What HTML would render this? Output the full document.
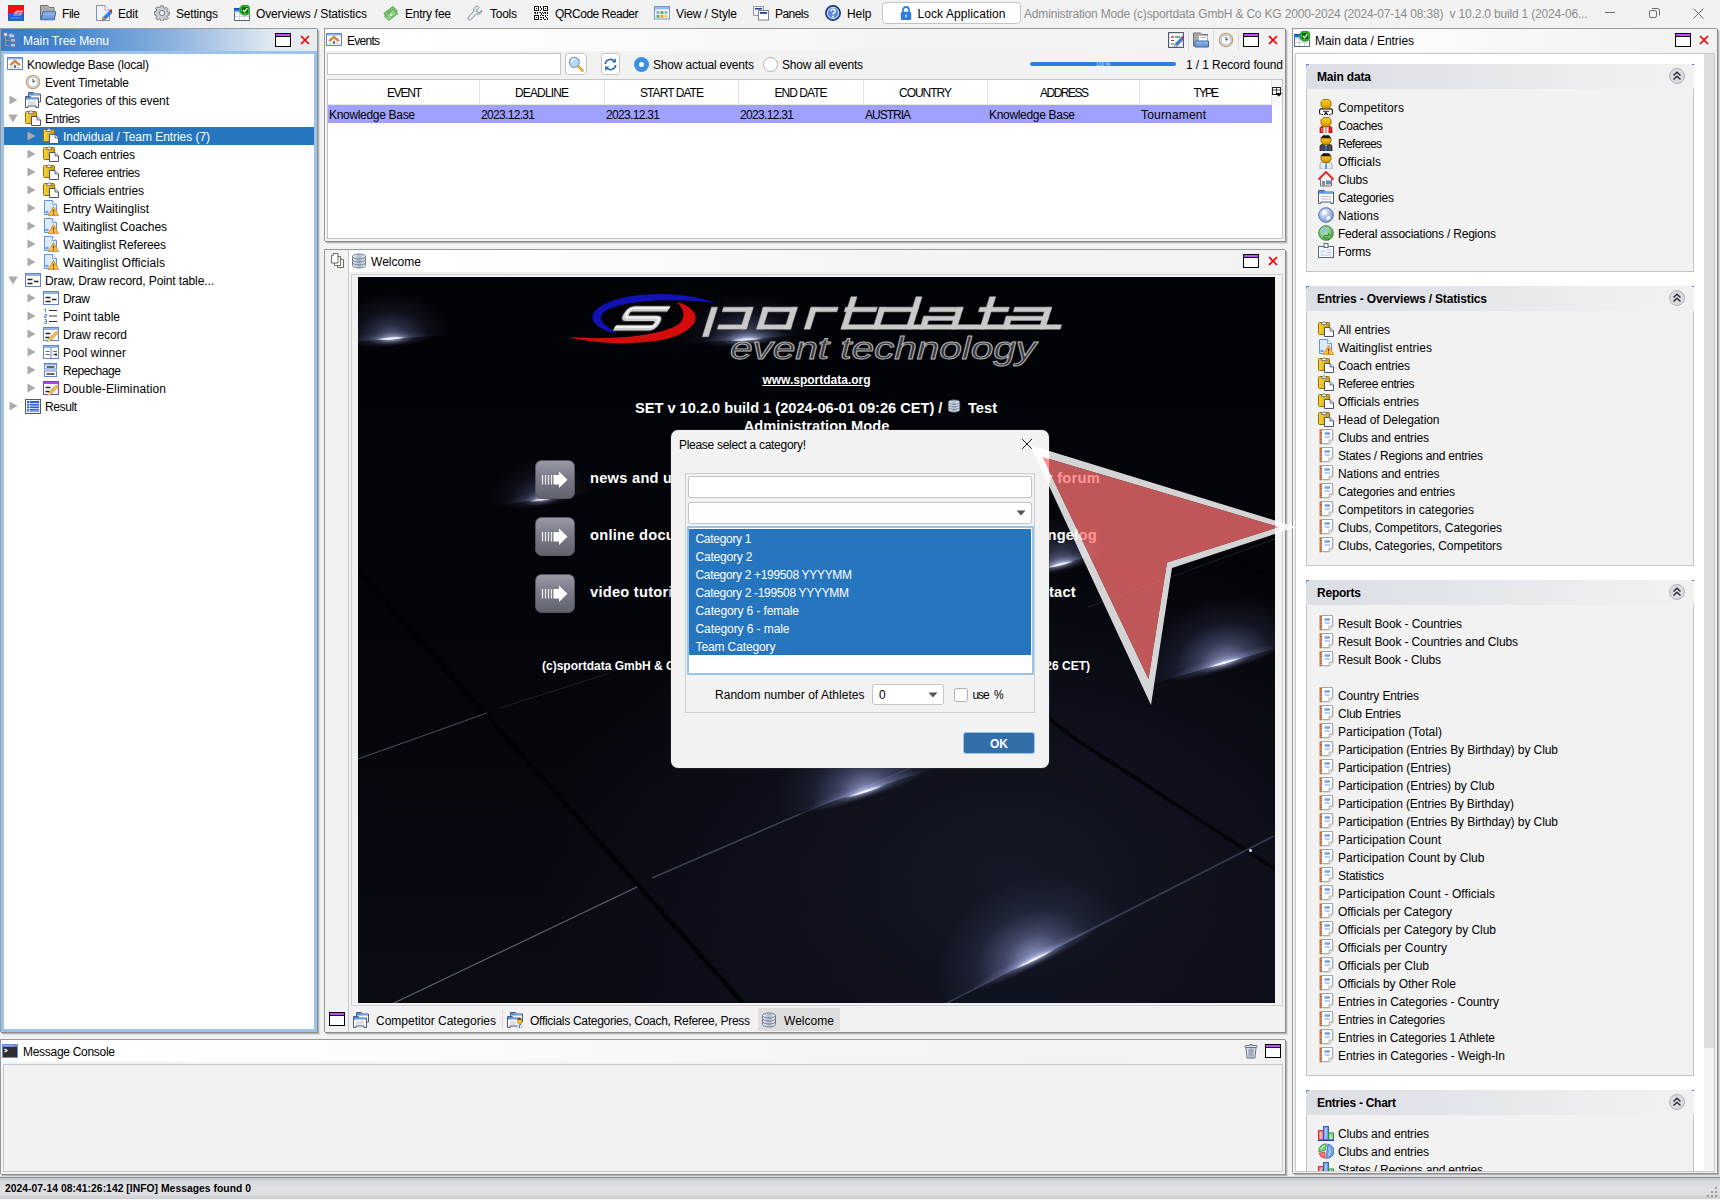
<!DOCTYPE html><html><head><meta charset="utf-8"><title>SET</title><style>*{box-sizing:border-box;margin:0;padding:0}
html,body{width:1720px;height:1200px;overflow:hidden;background:#f2f2f2;font-family:"Liberation Sans",sans-serif;font-size:12px;color:#000;letter-spacing:-0.12px}
.a{position:absolute}
.t{position:absolute;white-space:pre;line-height:16px;height:16px}
.ic{position:absolute;width:16px;height:16px;overflow:visible}
/* panels */
.pnl{position:absolute;background:#fff;border-top:1px solid #9a9a9a;border-left:1px solid #9a9a9a;box-shadow:1px 1px 0 #8c8c8c,2px 2px 0 #b4b4b4,3px 3px 0 #dcdcdc}
</style></head><body>
<svg width="0" height="0" style="position:absolute"><defs>
<linearGradient id="g-yel" x1="0" y1="0" x2="1" y2="0"><stop offset="0" stop-color="#f9d63a"/><stop offset="1" stop-color="#cf9a0c"/></linearGradient>
<linearGradient id="g-head" x1="0" y1="0" x2="0" y2="1"><stop offset="0" stop-color="#f8cc14"/><stop offset=".55" stop-color="#eab40c"/><stop offset="1" stop-color="#c88c06"/></linearGradient>
<linearGradient id="g-blu" x1="0" y1="0" x2="0" y2="1"><stop offset="0" stop-color="#9dc0ea"/><stop offset="1" stop-color="#5d8fd0"/></linearGradient>
<linearGradient id="g-sil" x1="0" y1="0" x2="1" y2="0"><stop offset="0" stop-color="#f4f6f9"/><stop offset=".5" stop-color="#aebccb"/><stop offset="1" stop-color="#eef1f5"/></linearGradient>
<radialGradient id="g-globe" cx=".4" cy=".35" r=".7"><stop offset="0" stop-color="#e8f0fb"/><stop offset="1" stop-color="#6f94d6"/></radialGradient>
<radialGradient id="g-globe2" cx=".4" cy=".35" r=".7"><stop offset="0" stop-color="#c9ecc0"/><stop offset="1" stop-color="#4aa44a"/></radialGradient>
<symbol id="i-max" viewBox="0 0 16 14"><rect x="0.5" y="0.5" width="15" height="13" fill="#fff" stroke="#000"/><rect x="1" y="1" width="14" height="2" fill="#c64dff"/><rect x="1" y="3" width="14" height="1" fill="#000"/></symbol>
<symbol id="i-x" viewBox="0 0 10 10"><path d="M1 1L9 9M9 1L1 9" stroke="#f20000" stroke-width="1.700" fill="none"/></symbol>
<symbol id="i-logo" viewBox="0 0 16 16"><rect width="16" height="8" fill="#f01010"/><rect y="8" width="16" height="8" fill="#1f5fd0"/><path d="M5 10.500h7.500l2-2.200H9l.5-.8h5l1-2H8.500l-3 3.300h5.500l-.5.700H6z" fill="#c4c0c4"/><path d="M5 10.500h7.500l.8-.9H5.800z" fill="#8a8a90"/><path d="M3 13h11" stroke="#6a90dc" stroke-width="1.600" stroke-dasharray="1.500 .7"/></symbol>
<symbol id="i-file" viewBox="0 0 16 16"><path d="M.5 14.500v-14h7l2 2h4.500v5" fill="#b4b4b4" stroke="#6e6e6e"/><path d="M1.500 3h6M1.500 5h11M1.500 7h11" stroke="#9a9a9a" stroke-width=".8"/><path d="M.8 14.800l2.200-8h12.800l-1.500 8z" fill="url(#g-blu)" stroke="#3a66aa"/></symbol>
<symbol id="i-edit" viewBox="0 0 16 16"><path d="M.5 .5h8.500l4.500 4.500v10.500h-13z" fill="#eef3fb" stroke="#8a8fa8"/><path d="M9 .5v4.500h4.500" fill="#fff" stroke="#8a8fa8" stroke-width=".8"/><path d="M6.500 15l.8-3 7-7 2.200 2.200-7 7z" fill="#2f7fe8" stroke="#1f55a8" stroke-width=".6"/><path d="M8 11.500l6-6" stroke="#9cc4f8" stroke-width=".8"/><path d="M13.600 5.700l1.300-1.300q1-.6 1.800.2t.2 1.800l-1.300 1.300z" fill="#e8202a"/><path d="M6.500 15l.8-3 2.200 2.200z" fill="#f0a830" stroke="#a86a10" stroke-width=".5"/></symbol>
<symbol id="i-gear" viewBox="0 0 16 16"><path d="M6.8.8h2.4l.4 1.9 1.3.6 1.7-1 1.7 1.7-1 1.7.6 1.3 1.9.4v2.4l-1.9.4-.6 1.3 1 1.7-1.7 1.7-1.7-1-1.3.6-.4 1.9H6.800l-.4-1.9-1.300-.6-1.700 1-1.700-1.700 1-1.700-.6-1.300-1.900-.4V6.800l1.900-.4.6-1.300-1-1.700 1.700-1.700 1.700 1 1.300-.6z" fill="#c9cdd3" stroke="#6c7078" stroke-width=".9"/><circle cx="8" cy="8" r="2.6" fill="#f2f2f2" stroke="#6c7078" stroke-width=".9"/></symbol>
<symbol id="i-tblchk" viewBox="0 0 16 16"><rect x=".5" y="3.500" width="15" height="12" fill="#fff" stroke="#c4cad4"/><path d="M.5 8h15M.5 11.500h15M5.500 3.500v12M10.500 3.500v12" stroke="#c9d0dc" stroke-width=".9"/><path d="M.5 15.500h15M15.500 9v6.500M.5 7v8.500" stroke="#5a6478" stroke-width="1" fill="none"/><rect x="0" y="3" width="5.500" height="3.500" fill="#1f6fe0"/><rect x="0" y="3" width="5.500" height="1" fill="#164fa8"/><path d="M8.500 0h5l2.500 2.500v5l-2.500 2.500h-5l-2.500-2.500v-5z" fill="#2ab82a" stroke="#168a16" stroke-width=".8"/><rect x="8" y="2" width="6" height="6" fill="#0a640a"/><path d="M9 5l1.600 1.700 2.800-3.500" stroke="#fff" stroke-width="1.300" fill="none"/></symbol>
<symbol id="i-money" viewBox="0 0 16 16"><path d="M.8 8.500l9-7 4.500 4.200-9 7z" fill="#7cc870" stroke="#4a9a46" stroke-width=".9"/><path d="M1.500 11.200l9-7 4.500 4.200-9 7z" fill="#92d486" stroke="#4a9a46" stroke-width=".9"/><circle cx="8.300" cy="9.700" r="1.900" fill="#dcf2d6" stroke="#4a9a46" stroke-width=".6"/><path d="M3.500 11l1.200 1.200M12 7.200l1.200 1.200" stroke="#4a9a46" stroke-width=".7"/></symbol>
<symbol id="i-wrench" viewBox="0 0 16 16"><path d="M10.500 1a4 4 0 0 0-3.700 5.400L1.300 12a1.700 1.700 0 0 0 2.500 2.500L9.400 9A4 4 0 0 0 14.900 5.200L12.500 7.500 10.300 7 9.800 4.800 12.100 2.500A4 4 0 0 0 10.500 1z" fill="#e6eaf0" stroke="#78828f" stroke-width=".9"/></symbol>
<symbol id="i-qr" viewBox="0 0 16 16"><rect width="16" height="16" fill="#fff"/><g fill="none" stroke="#111" stroke-width="1"><rect x="1.500" y="1.500" width="4" height="4"/><rect x="10.500" y="1.500" width="4" height="4"/><rect x="1.500" y="10.500" width="4" height="4"/></g><g fill="#111"><rect x="3" y="3" width="1" height="1"/><rect x="12" y="3" width="1" height="1"/><rect x="3" y="12" width="1" height="1"/><rect x="7" y="1" width="1" height="2"/><rect x="8" y="3" width="1" height="2"/><rect x="7" y="5" width="1" height="1"/><rect x="1" y="7" width="2" height="1"/><rect x="4" y="7" width="1" height="2"/><rect x="6" y="7" width="2" height="1"/><rect x="9" y="7" width="1" height="1"/><rect x="11" y="7" width="2" height="1"/><rect x="14" y="7" width="1" height="2"/><rect x="2" y="8" width="1" height="1"/><rect x="8" y="8" width="1" height="2"/><rect x="10" y="8" width="1" height="1"/><rect x="12" y="8" width="1" height="1"/><rect x="7" y="10" width="1" height="1"/><rect x="9" y="10" width="2" height="1"/><rect x="12" y="10" width="1" height="2"/><rect x="14" y="10" width="1" height="1"/><rect x="7" y="12" width="2" height="1"/><rect x="10" y="12" width="1" height="2"/><rect x="13" y="12" width="1" height="1"/><rect x="8" y="14" width="1" height="1"/><rect x="11" y="14" width="2" height="1"/><rect x="14" y="13" width="1" height="2"/><rect x="7" y="14" width="1" height="1"/></g></symbol>
<symbol id="i-view" viewBox="0 0 16 16"><rect x=".5" y="1.500" width="15" height="12.500" fill="#fff" stroke="#6f94d6"/><rect x="1" y="2" width="14" height="2.500" fill="#9abcec"/><rect x="2.500" y="6" width="3" height="3" fill="#7fb4ee"/><rect x="6.500" y="6" width="3" height="3" fill="#5fae4c"/><rect x="10.500" y="6" width="3" height="3" fill="#7fb4ee"/><rect x="2.500" y="9.800" width="3" height="3" fill="#5fae4c"/><rect x="6.500" y="9.800" width="3" height="3" fill="#e8933a"/><rect x="10.500" y="9.800" width="3" height="3" fill="#f0cc3a"/></symbol>
<symbol id="i-panels" viewBox="0 0 16 16"><rect x=".5" y="1.500" width="10" height="9" fill="#f4f4f4" stroke="#9a9fa8"/><rect x="2" y="3" width="7" height="1.500" fill="#1f3f9a"/><rect x="5.500" y="5.500" width="10" height="9.500" fill="#fff" stroke="#7a7f88"/><rect x="7" y="7" width="7" height="1.800" fill="#1f3f9a"/></symbol>
<symbol id="i-help" viewBox="0 0 16 16"><circle cx="8" cy="8" r="7.300" fill="#3b6fd0" stroke="#16286a" stroke-width="1.200"/><circle cx="8" cy="8" r="5.600" fill="#5a8ae0" stroke="#e4ecfa" stroke-width=".9"/><path d="M6 6.300a2 2 0 1 1 3 1.700c-.7.400-1 .8-1 1.600" stroke="#fff" stroke-width="1.500" fill="none"/><circle cx="8" cy="11.700" r=".9" fill="#fff"/></symbol>
<symbol id="i-lock" viewBox="0 0 12 16"><path d="M3 7V5a3 3 0 0 1 6 0v2" fill="none" stroke="#2f7be0" stroke-width="1.800"/><rect x=".8" y="6.800" width="10.400" height="8.200" rx="1.500" fill="#2f7be0"/><rect x="5.300" y="9.500" width="1.400" height="3" fill="#d6e6fb"/></symbol>
<symbol id="i-tree" viewBox="0 0 16 16"><path d="M2.500 4v10M2.500 8.500h4M2.500 13.500h4M3 2.500h3" stroke="#9a948c" fill="none"/><rect x="1" y="1" width="3" height="3" fill="#fff" stroke="#8c8c9c" stroke-width=".8"/><path d="M6 1.500h3l1 1h1.500v3H6z" fill="#a9c9f0" stroke="#6a7fa8" stroke-width=".8"/><rect x="7.500" y="6.500" width="5" height="3.500" fill="#9fc4f2" stroke="#6a6f98" stroke-width=".9"/><rect x="7.500" y="11.500" width="5" height="3.500" fill="#9fc4f2" stroke="#6a6f98" stroke-width=".9"/></symbol>
<symbol id="i-home" viewBox="0 1 16 16"><rect x=".5" y="2.500" width="15" height="12" fill="#fff" stroke="#5f83cc"/><rect x="1" y="3" width="14" height="1.500" fill="#8fb3ea"/><path d="M4.800 9.500L8 6.800l3.200 2.700V13H4.800z" fill="#f1f1ee" stroke="#bdbdb5" stroke-width=".5"/><path d="M2.600 9.300L8 4.600l5.400 4.700-1.300 1.300L8 7.200l-4.100 3.400z" fill="#d08a4a" stroke="#b06a2a" stroke-width=".4"/><rect x="7" y="10" width="2" height="3" fill="#77777f"/><path d="M2 13.300q1.500-1.800 3 0zM11 13.300q1.500-1.800 3 0z" fill="#56b040"/></symbol>
<symbol id="i-clock" viewBox="0 0 16 16"><circle cx="8" cy="8" r="6.600" fill="#f6f9fd" stroke="#c9a26a" stroke-width="1.400"/><circle cx="8" cy="8" r="5" fill="#fff" stroke="#8fb0e6" stroke-width=".9"/><path d="M8 4.800V8.300l2.300-1.700" stroke="#444" stroke-width="1" fill="none"/></symbol>
<symbol id="i-cats" viewBox="0 0 16 16"><path d="M3.500 9V.5h5l1 1.500h6V10h-2" fill="#fff" stroke="#4d5a70"/><path d="M4 1h4.200l1 1.500H15v1H4z" fill="#4a94ea"/><path d="M.5 15.500V4.500h5l1 1.500h7v9.500h-2.500v-1.500h-8v1.500z" fill="#fff" stroke="#4d5a70"/><path d="M1 5h4.200l1 1.500H13v1H1z" fill="#4a94ea"/><path d="M3 10h8M3 12h8" stroke="#b9c0cc"/></symbol>
<symbol id="i-clip" viewBox="0 0 16 16"><rect x=".5" y="1.500" width="11" height="12" rx="1" fill="url(#g-yel)" stroke="#9a6c06"/><path d="M3.500 3.500V2l1.200-.3Q6 -.6 7.300 1.700L8.500 2v1.500z" fill="#eef0f4" stroke="#6a6f7c" stroke-width=".8"/><path d="M6.500 6.500h5.500l3.500 3.500v5.500h-9z" fill="#fdfdff" stroke="#4d5268"/><path d="M12 6.500v3.500h3.500" fill="#d9dcf0" stroke="#4d5268" stroke-width=".8"/></symbol>
<symbol id="i-dwarn" viewBox="0 0 16 16"><path d="M1.500 .5h8l4 4v10h-12z" fill="#dcebfb" stroke="#5f93dc"/><path d="M9.500 .5v4h4" fill="#f4f9ff" stroke="#5f93dc" stroke-width=".8"/><rect x="2.500" y="11" width="3" height="2" fill="#5f9fea"/><path d="M10.500 6.500L5.300 15.500h10.400z" fill="#f9c449" stroke="#d98a1e" stroke-width=".9"/><path d="M10.500 9.500v3" stroke="#7a3c00" stroke-width="1.300"/><circle cx="10.500" cy="14" r=".8" fill="#7a3c00"/></symbol>
<symbol id="i-draw" viewBox="0 0 16 16"><rect x=".5" y="1.500" width="15" height="13" fill="#fff" stroke="#5f83cc"/><rect x="1" y="2" width="14" height="2" fill="#8fb3ea"/><path d="M2.500 7.500h5M2.500 11.500h5M9 9.500h4.500" stroke="#222" stroke-width="1.400"/></symbol>
<symbol id="i-ptable" viewBox="0 0 16 16"><path d="M6 2.500h8M6 8h8M6 13.500h8" stroke="#333" stroke-width="1.200"/><path d="M2.500 0.500v4M1.500 1.500l1-1M1.500 6.500h2v1.500h-2v1.500h2M1.500 11.500h2v4h-2M1.500 13.500h2" stroke="#4a7fd8" stroke-width=".9" fill="none"/></symbol>
<symbol id="i-drawrec" viewBox="0 0 16 16"><rect x=".5" y="1.500" width="15" height="13" fill="#fff" stroke="#5f83cc"/><rect x="1" y="2" width="14" height="2" fill="#8fb3ea"/><path d="M2.500 7.500h5M2.500 11.500h4" stroke="#222" stroke-width="1.400"/><path d="M4.500 15.500l1-3 8-7.500 2 2-8 7.500z" fill="#f2c05a" stroke="#b9832a" stroke-width=".7"/><path d="M4.500 15.500l1-3 2 2z" fill="#e8d9b0"/></symbol>
<symbol id="i-pool" viewBox="0 0 16 16"><rect x=".5" y="1.500" width="15" height="13" fill="#fff" stroke="#5f83cc"/><rect x="1" y="2" width="14" height="2" fill="#8fb3ea"/><path d="M8 4v10.500" stroke="#5f83cc"/><path d="M2.500 7.500h4M2.500 10.500h4M10 7.500h4M10 10.500h2" stroke="#666" stroke-width="1.200"/><rect x="12" y="9.500" width="2" height="2" fill="#222"/></symbol>
<symbol id="i-repe" viewBox="0 0 16 16"><rect x="1.500" y="1.500" width="12" height="5.500" fill="#fff" stroke="#5f83cc"/><rect x="2" y="2" width="11" height="1.500" fill="#8fb3ea"/><rect x="1.500" y="9" width="12" height="5.500" fill="#fff" stroke="#5f83cc"/><path d="M3.500 5h8M3.500 12h8" stroke="#333" stroke-width="1.600"/></symbol>
<symbol id="i-dbl" viewBox="0 0 16 16"><rect x=".5" y="1.500" width="15" height="13" fill="#fff" stroke="#8a3fb8"/><rect x="1" y="2" width="14" height="2" fill="#a64de0"/><path d="M2.500 7.500h5M2.500 11.500h4M8.500 9.500h3" stroke="#222" stroke-width="1.400"/><path d="M4.500 15.500l1-3 8-7.500 2 2-8 7.500z" fill="#f2c05a" stroke="#b9832a" stroke-width=".7"/><path d="M4.500 15.500l1-3 2 2z" fill="#e8d9b0"/></symbol>
<symbol id="i-result" viewBox="0 0 16 16"><rect x=".5" y="1.500" width="15" height="14" fill="#f4f6fb" stroke="#555a68"/><rect x="2" y="3" width="12" height="11" fill="#2a5fe0"/><path d="M2 5.500h12M2 8h12M2 10.500h12M2 13h12" stroke="#e8eefc" stroke-width=".9"/><path d="M4.500 3v11" stroke="#e8eefc" stroke-width=".7"/></symbol>
<symbol id="i-mag" viewBox="0 0 16 16"><path d="M9.500 9.500l5 5" stroke="#d9962a" stroke-width="2.600" stroke-linecap="round"/><path d="M9.500 9.500l5 5" stroke="#f3c76a" stroke-width="1" stroke-linecap="round"/><circle cx="6.300" cy="6.300" r="5" fill="#bcd8f6" stroke="#7e9cc8" stroke-width="1.200"/><path d="M3.300 5.500a3.200 3.200 0 0 1 4-2.300" stroke="#fff" stroke-width="1.200" fill="none"/></symbol>
<symbol id="i-refresh" viewBox="0 0 16 16"><path d="M2.500 7.500a5.500 5 0 0 1 9.500-3.300" fill="none" stroke="#2d6fae" stroke-width="1.800"/><path d="M13.800 1.200v4.600h-4.600z" fill="#2d6fae"/><path d="M13.500 8.500a5.500 5 0 0 1-9.500 3.300" fill="none" stroke="#2d6fae" stroke-width="1.800"/><path d="M2.200 14.800v-4.600h4.600z" fill="#2d6fae"/></symbol>
<symbol id="i-tbledit" viewBox="0 0 16 16"><rect x=".5" y=".5" width="15" height="15" fill="#fff" stroke="#555c6a"/><rect x="1.500" y="1.500" width="13" height="13" fill="none" stroke="#c9ced8" stroke-width=".7"/><path d="M3 5h3" stroke="#d33" stroke-width="1.500"/><path d="M7 5h5" stroke="#3a9a4a" stroke-width="1.500"/><path d="M3 8.500h3M3 12h3" stroke="#555" stroke-width="1.200"/><path d="M6 15l1-3 7-7.500 2 2-7 7.500z" fill="#3f7fe0" stroke="#2a559c" stroke-width=".6"/><path d="M13.200 5.300l1.300-1.300 2 2-1.300 1.300z" fill="#e23"/><path d="M6 15l1-3 2 2z" fill="#f3d08a"/></symbol>
<symbol id="i-folder2" viewBox="0 0 16 16"><path d="M.5 14.500v-13.500h7l1.500 1.500h5.500v6" fill="#b4b4b4" stroke="#6e6e6e"/><path d="M1.500 3h3M1.500 5h3M1.500 7h3" stroke="#909090" stroke-width=".8"/><rect x="5.500" y="3.500" width="9" height="6" fill="#fbfbfb" stroke="#a8a8a8" stroke-width=".8"/><path d="M7.500 5.500h5" stroke="#b0b0b0"/><path d="M2 15v-6h13.500v6z" fill="url(#g-blu)" stroke="#3a66aa"/></symbol>
<symbol id="i-colch" viewBox="0 0 10 10"><rect x=".5" y=".5" width="8" height="7" fill="#fff" stroke="#222"/><path d="M.5 3h8M4.500 .5v7" stroke="#222" stroke-width=".8"/><path d="M3.500 6h6.500l-3.250 3.800z" fill="#111"/></symbol>
<symbol id="i-docs" viewBox="0 0 16 16"><path d="M7.500 6.500h6v8h-6z" fill="#fff" stroke="#555548" stroke-width=".85"/><path d="M4.500 3.500h6v9h-6z" fill="#fff" stroke="#555548" stroke-width=".85"/><path d="M3.500 .5h4.500v9.500h-6.500v-7.500z" fill="#fff" stroke="#555548" stroke-width=".85"/><path d="M1.500 2.500h2v-2" fill="#ddd" stroke="#555548" stroke-width=".6"/></symbol>
<symbol id="i-db" viewBox="0 0 16 16"><path d="M1.500 3.500a6.500 2.500 0 0 1 13 0v9a6.500 2.500 0 0 1-13 0z" fill="url(#g-sil)" stroke="#66708a" stroke-width=".9"/><path d="M1.500 3.500a6.500 2.500 0 0 0 13 0M1.500 6.500a6.500 2.500 0 0 0 13 0M1.500 9.500a6.500 2.500 0 0 0 13 0" fill="none" stroke="#66708a" stroke-width=".9"/></symbol>
<symbol id="i-cats2" viewBox="0 0 16 16"><path d="M3.500 9V.5h5l1 1.500h6V10h-2" fill="#fff" stroke="#4d5a70"/><path d="M4 1h4.200l1 1.500H15v1H4z" fill="#4a94ea"/><path d="M.5 15.500V4.500h5l1 1.500h7v9.500h-2.500v-1.500h-8v1.500z" fill="#fff" stroke="#4d5a70"/><path d="M1 5h4.200l1 1.500H13v1H1z" fill="#4a94ea"/><path d="M3 10h6M3 12h6" stroke="#b9c0cc"/><path d="M10.300 7.500h4.400v2.500q0 2-2.200 2t-2.200-2z" fill="#f2c020" stroke="#a87a06" stroke-width=".5"/><path d="M10.300 7.500q0-1.200 2.200-1.200t2.200 1.200z" fill="#2a2320"/><path d="M10 16v-2.500q2.500-1.600 5 0V16z" fill="#eef2f8" stroke="#8e9ab2" stroke-width=".5"/><rect x="12" y="12.800" width="1" height="3.200" fill="#3f7fe0"/></symbol>
<symbol id="i-arrowbtn" viewBox="0 0 40 39"><defs><linearGradient id="g-ab" x1="0" y1="0" x2="0" y2="1"><stop offset="0" stop-color="#9a9aa6"/><stop offset=".5" stop-color="#787884"/><stop offset="1" stop-color="#62626e"/></linearGradient></defs><rect x=".5" y=".5" width="39" height="38" rx="6" fill="url(#g-ab)" stroke="#55555f"/><path d="M7.500 15v9.500M10.500 15v9.500M13.500 15v9.500M16.500 15v9.500" stroke="#fff" stroke-width="1.300" opacity=".85"/><path d="M18.500 15h5.500v-3.500l8.500 8.200-8.500 8.200V24.500h-5.500z" fill="#fff"/></symbol>
<symbol id="i-term" viewBox="0 0 16 16"><rect x=".5" y="1.500" width="15" height="13" fill="#2e2e30" stroke="#5f8fd8"/><rect x="1" y="2" width="14" height="1.800" fill="#7fa8e6"/><rect x="12.500" y="2.200" width="1.500" height="1.200" fill="#e44"/><path d="M2.500 6l2.500 1.500-2.500 1.500" stroke="#fff" stroke-width="1.300" fill="none"/></symbol>
<symbol id="i-trash" viewBox="0 0 16 16"><path d="M3 4.500h10l-1 10.500h-8z" fill="url(#g-sil)" stroke="#5f6680" stroke-width=".9"/><path d="M6 6v7.500M8 6v7.500M10 6v7.500" stroke="#7d86a0" stroke-width=".8"/><rect x="1.800" y="2.500" width="12.400" height="2" rx="1" fill="#e9edf3" stroke="#5f6680" stroke-width=".9"/><path d="M6 2.500q2-2.500 4 0" fill="#e9edf3" stroke="#5f6680" stroke-width=".9"/></symbol>
<symbol id="i-chev" viewBox="0 0 16 16"><circle cx="8" cy="8" r="7.500" fill="#d9dbe1" stroke="#a9abb2" stroke-width=".9"/><path d="M4.500 7.500L8 4.200l3.500 3.300M4.500 11.500L8 8.200l3.500 3.300" stroke="#2a2a2e" stroke-width="1.400" fill="none"/></symbol>
<symbol id="i-p1" viewBox="0 0 16 16"><path d="M2.600 15.300q-1-.2-1-1.500v-2.300q0-1.600 1.600-1.600h9.600q1.600 0 1.600 1.600v2.300q0 1.300-1 1.500" fill="#fff" stroke="#111" stroke-width="1.100"/><path d="M3.500 15.500h9" stroke="#111" stroke-width="1" stroke-dasharray="1.500 1"/><path d="M6.300 15l1.700-3 1.700 3z" fill="#111"/><path d="M5 12.300h6" stroke="#111" stroke-width=".9"/><path d="M5.200 .5h5.600l2.200 2.200v4l-2.400 3H5.400L3 6.700v-4z" fill="url(#g-head)" stroke="#8a5a04" stroke-width=".8"/></symbol>
<symbol id="i-p2" viewBox="0 0 16 16"><path d="M2 16v-4.500q0-2 2-2h8q2 0 2 2V16z" fill="#e01818" stroke="#b00c0c" stroke-width=".7"/><rect x="5.500" y="10" width="5" height="6" fill="#fff"/><path d="M8 10v6" stroke="#e01818" stroke-width="1"/><path d="M4 11v4" stroke="#f8a0a0" stroke-width=".9"/><path d="M5.200 .5h5.600l2.200 2.200v4l-2.400 3H5.400L3 6.700v-4z" fill="url(#g-head)" stroke="#8a5a04" stroke-width=".8"/></symbol>
<symbol id="i-p3" viewBox="0 0 16 16"><path d="M2 16v-4.500q0-2 2-2h8q2 0 2 2V16z" fill="#3c4048" stroke="#1c1f26" stroke-width=".7"/><path d="M6.500 9.800L8 11.500l1.500-1.700" fill="#e8ecf2"/><rect x="7.200" y="10.500" width="1.600" height="5.500" fill="#2f7fe8"/><path d="M4 11.500v4M12 11.500v4" stroke="#6a6f7a" stroke-width=".8"/><path d="M5.200 .5h5.600l2.200 2.200v4l-2.400 3H5.400L3 6.700v-4z" fill="url(#g-head)" stroke="#8a5a04" stroke-width=".8"/><path d="M3.200 3.200V2.700L5.200 .6h5.600l2 2.100v.5z" fill="#1c1612"/></symbol>
<symbol id="i-p4" viewBox="0 0 16 16"><path d="M2 16v-4.500q0-2 2-2h8q2 0 2 2V16z" fill="#f2f5fa" stroke="#8e9ab2" stroke-width=".8"/><rect x="7.200" y="10.500" width="1.600" height="5.500" fill="#2f7fe8"/><path d="M4 11.500v4M12 11.500v4" stroke="#c4ccd8" stroke-width=".8"/><path d="M5.200 .5h5.600l2.200 2.200v4l-2.400 3H5.400L3 6.700v-4z" fill="url(#g-head)" stroke="#8a5a04" stroke-width=".8"/><path d="M3.200 3.200V2.700L5.200 .6h5.600l2 2.100v.5z" fill="#1c1612"/></symbol>
<symbol id="i-house" viewBox="0 0 16 16"><path d="M2.500 8v7h11V8" fill="#f1f1ee" stroke="#70747c"/><rect x="4" y="10" width="3" height="5" fill="#8a8e96"/><rect x="8.500" y="10" width="4" height="3" fill="#6f94d6" stroke="#4a5f90" stroke-width=".6"/><path d="M.5 8.500L8 1l7.500 7.500" fill="none" stroke="#e02a2a" stroke-width="2"/></symbol>
<symbol id="i-catf" viewBox="0 0 16 16"><path d="M.5 14.500V1.500h6l1 1.500h8v11.500h-2.500v-1.500h-10v1.500z" fill="#fff" stroke="#4d5a70"/><path d="M1 2h5.200l1 1.500H15v1.200H1z" fill="#4a94ea"/><path d="M3 7.500h10M3 10h10" stroke="#b9c0cc"/></symbol>
<symbol id="i-globe" viewBox="0 0 16 16"><circle cx="8" cy="8" r="7.300" fill="url(#g-globe)" stroke="#5a6fb0"/><path d="M5 3.500q3-1.500 4 .5t-1 3-3 1-1-2zM9.500 9q2.500-.5 3 1t-2 3-2-2z" fill="#f6f9ff"/></symbol>
<symbol id="i-globe2" viewBox="0 0 16 16"><circle cx="8" cy="8" r="7.300" fill="url(#g-globe2)" stroke="#3a8a3a"/><path d="M5 3.500q3-1.500 4 .5t-1 3-3 1-1-2z" fill="#8fc4f0"/><path d="M6 10.500h4.500v-2l4 3.300-4 3.300v-2H6z" fill="#6ac25a" stroke="#2f7a2f" stroke-width=".7"/></symbol>
<symbol id="i-forms" viewBox="0 0 16 16"><rect x=".5" y="3.500" width="15" height="11" fill="#f8fbff" stroke="#5a6478"/><rect x="6" y=".5" width="4" height="4" fill="#fff" stroke="#5a6478"/><rect x="2.500" y="6.500" width="4.500" height="3.500" fill="#cfe0f6"/><path d="M8.500 7h5M8.500 9.500h5M2.500 12h11" stroke="#b4c2d6"/></symbol>
<symbol id="i-rep" viewBox="0 0 16 16"><path d="M3.500 .5h11v10.500l-3.500 3.500h-7.500z" fill="#fff" stroke="#a4a4a4"/><path d="M14.500 11h-3.500v3.500" fill="#e9e9e9" stroke="#a4a4a4" stroke-width=".8"/><path d="M15.300 2v9.500l-3.800 3.800H5" fill="none" stroke="#d4d4d4" stroke-width=".9"/><rect x="6.500" y="3.300" width="5.500" height="2.400" fill="#6f9fe8"/><path d="M6.500 8h5.500" stroke="#6f9fe8"/><path d="M2.600 .3v15" stroke="#b8501c" stroke-width="2"/><path d="M2.600 .3v15" stroke="#f0b890" stroke-width="2" stroke-dasharray=".7 1.100"/></symbol>
<symbol id="i-bar" viewBox="0 0 16 16"><rect x=".5" y="5.500" width="5" height="9.500" fill="#f28080" stroke="#d03030"/><rect x="2" y="7" width="1.500" height="7" fill="#f8c0a0"/><rect x="5.500" y="1.500" width="5" height="13.500" fill="#6fa4ec" stroke="#2f62c0"/><rect x="7" y="3" width="1.500" height="11" fill="#a8cbf6"/><rect x="10.500" y="8" width="5" height="7" fill="#88d488" stroke="#2f8f3a"/><rect x="12" y="9.500" width="1.500" height="4.500" fill="#c0ecc0"/><path d="M0 15.500h16" stroke="#1f3f9a" stroke-width="1"/></symbol>
<symbol id="i-pie" viewBox="0 0 16 16"><path d="M9 8.500L9.800 1.200A7 7 0 0 1 8 15.300z" fill="#6fa4ec" stroke="#2f62c0" stroke-width=".8"/><path d="M11 4.500q2 3.500-.5 8" stroke="#b4d2f8" stroke-width="1.400" fill="none"/><path d="M7.300 7.300L.8 8.800A7 7 0 0 1 8.300 .9z" fill="#7fcf7f" stroke="#2f8f3a" stroke-width=".8"/><path d="M3 6.500q1-3 4-4" stroke="#c8eec8" stroke-width="1.200" fill="none"/><path d="M6.800 9L7 15.200A7 7 0 0 1 1 10.300z" fill="#f27a7a" stroke="#d03030" stroke-width=".8"/></symbol>
</defs></svg>

<div class="a" style="left:0;top:0;width:1720px;height:28px;background:#f2f2f2"></div>
<svg class="ic" style="left:8px;top:5px;width:16px;height:16px"><use href="#i-logo"/></svg>
<svg class="ic" style="left:40px;top:5px;width:16px;height:16px"><use href="#i-file"/></svg>
<div class="t" style="left:62px;top:6px;letter-spacing:-0.445px;">File</div>
<svg class="ic" style="left:96px;top:5px;width:16px;height:16px"><use href="#i-edit"/></svg>
<div class="t" style="left:118px;top:6px;letter-spacing:-0.226px;">Edit</div>
<svg class="ic" style="left:154px;top:5px;width:16px;height:16px"><use href="#i-gear"/></svg>
<div class="t" style="left:176px;top:6px;letter-spacing:-0.194px;">Settings</div>
<svg class="ic" style="left:234px;top:5px;width:16px;height:16px"><use href="#i-tblchk"/></svg>
<div class="t" style="left:256px;top:6px;letter-spacing:-0.144px;">Overviews / Statistics</div>
<svg class="ic" style="left:383px;top:5px;width:16px;height:16px"><use href="#i-money"/></svg>
<div class="t" style="left:405px;top:6px;letter-spacing:-0.253px;">Entry fee</div>
<svg class="ic" style="left:467px;top:5px;width:16px;height:16px"><use href="#i-wrench"/></svg>
<div class="t" style="left:490px;top:6px;letter-spacing:-0.253px;">Tools</div>
<svg class="ic" style="left:533px;top:5px;width:16px;height:16px"><use href="#i-qr"/></svg>
<div class="t" style="left:555px;top:6px;letter-spacing:-0.490px;">QRCode Reader</div>
<svg class="ic" style="left:654px;top:5px;width:16px;height:16px"><use href="#i-view"/></svg>
<div class="t" style="left:676px;top:6px;letter-spacing:-0.134px;">View / Style</div>
<svg class="ic" style="left:753px;top:5px;width:16px;height:16px"><use href="#i-panels"/></svg>
<div class="t" style="left:775px;top:6px;letter-spacing:-0.538px;">Panels</div>
<svg class="ic" style="left:825px;top:5px;width:16px;height:16px"><use href="#i-help"/></svg>
<div class="t" style="left:847px;top:6px;letter-spacing:-0.059px;">Help</div>
<div class="a" style="left:882px;top:2px;width:139px;height:22px;background:#fff;border:1px solid #c4c4c4;border-radius:4px"></div>
<svg class="ic" style="left:899.5px;top:5px;width:12px;height:16px"><use href="#i-lock"/></svg>
<div class="t" style="left:917.5px;top:6px;letter-spacing:0.085px;">Lock Application</div>
<div class="t" style="left:1024px;top:6px;letter-spacing:-0.176px;color:#8c8c8c">Administration Mode (c)sportdata GmbH &amp; Co KG 2000-2024 (2024-07-14 08:38)  v 10.2.0 build 1 (2024-06...</div>
<svg class="a" style="left:1590px;top:0;width:130px;height:28px" viewBox="0 0 130 28"><g stroke="#6b6b6b" stroke-width="1" fill="none"><path d="M15 12.500h10"/><rect x="59.500" y="10.500" width="7" height="7" rx="1.600"/><path d="M62 8.500h5.500a2 2 0 0 1 2 2v5"/><path d="M103.500 8.500l10 10M113.500 8.500l-10 10"/></g></svg>
<div class="pnl" style="left:0;top:28px;width:317px;height:1004px;background:#9cc3ec"></div>
<div class="a" style="left:1px;top:29px;width:316px;height:22px;background:linear-gradient(90deg,#3a7bc8 0%,#4585cd 20%,#8db3df 55%,#dfe8f1 85%,#e9edf1 100%)"></div>
<div class="a" style="left:4px;top:54px;width:310px;height:975px;background:#fff"></div>
<svg class="ic" style="left:3px;top:32px;width:16px;height:16px"><use href="#i-tree"/></svg>
<div class="t" style="left:23px;top:33px;letter-spacing:-0.054px;color:#fff">Main Tree Menu</div>
<svg class="ic" style="left:275px;top:33px;width:16px;height:14px"><use href="#i-max"/></svg>
<svg class="ic" style="left:300px;top:35px;width:10px;height:10px"><use href="#i-x"/></svg>
<svg class="ic" style="left:7px;top:56px;width:16px;height:16px"><use href="#i-home"/></svg>
<div class="t" style="left:27px;top:57px;letter-spacing:-0.194px;">Knowledge Base (local)</div>
<svg class="ic" style="left:25px;top:74px;width:16px;height:16px"><use href="#i-clock"/></svg>
<div class="t" style="left:45px;top:75px;letter-spacing:-0.146px;">Event Timetable</div>
<svg class="a" style="left:9px;top:95px;width:9px;height:10px" viewBox="0 0 9 10"><path d="M.5 .5L8.500 5 .5 9.500z" fill="#ababab"/></svg>
<svg class="ic" style="left:25px;top:92px;width:16px;height:16px"><use href="#i-cats"/></svg>
<div class="t" style="left:45px;top:93px;letter-spacing:-0.090px;">Categories of this event</div>
<svg class="a" style="left:8px;top:114px;width:10px;height:9px" viewBox="0 0 10 9"><path d="M.3 .5h9.400L5 8.500z" fill="#ababab"/></svg>
<svg class="ic" style="left:25px;top:110px;width:16px;height:16px"><use href="#i-clip"/></svg>
<div class="t" style="left:45px;top:111px;letter-spacing:-0.391px;">Entries</div>
<div class="a" style="left:4px;top:127px;width:310px;height:18px;background:#2675bf"></div>
<svg class="a" style="left:27px;top:131px;width:9px;height:10px" viewBox="0 0 9 10"><path d="M.5 .5L8.500 5 .5 9.500z" fill="#ababab"/></svg>
<svg class="ic" style="left:43px;top:128px;width:16px;height:16px"><use href="#i-clip"/></svg>
<div class="t" style="left:63px;top:129px;letter-spacing:-0.054px;color:#fff">Individual / Team Entries (7)</div>
<svg class="a" style="left:27px;top:149px;width:9px;height:10px" viewBox="0 0 9 10"><path d="M.5 .5L8.500 5 .5 9.500z" fill="#ababab"/></svg>
<svg class="ic" style="left:43px;top:146px;width:16px;height:16px"><use href="#i-clip"/></svg>
<div class="t" style="left:63px;top:147px;letter-spacing:-0.170px;">Coach entries</div>
<svg class="a" style="left:27px;top:167px;width:9px;height:10px" viewBox="0 0 9 10"><path d="M.5 .5L8.500 5 .5 9.500z" fill="#ababab"/></svg>
<svg class="ic" style="left:43px;top:164px;width:16px;height:16px"><use href="#i-clip"/></svg>
<div class="t" style="left:63px;top:165px;letter-spacing:-0.360px;">Referee entries</div>
<svg class="a" style="left:27px;top:185px;width:9px;height:10px" viewBox="0 0 9 10"><path d="M.5 .5L8.500 5 .5 9.500z" fill="#ababab"/></svg>
<svg class="ic" style="left:43px;top:182px;width:16px;height:16px"><use href="#i-clip"/></svg>
<div class="t" style="left:63px;top:183px;letter-spacing:-0.050px;">Officials entries</div>
<svg class="a" style="left:27px;top:203px;width:9px;height:10px" viewBox="0 0 9 10"><path d="M.5 .5L8.500 5 .5 9.500z" fill="#ababab"/></svg>
<svg class="ic" style="left:43px;top:200px;width:16px;height:16px"><use href="#i-dwarn"/></svg>
<div class="t" style="left:63px;top:201px;letter-spacing:0.026px;">Entry Waitinglist</div>
<svg class="a" style="left:27px;top:221px;width:9px;height:10px" viewBox="0 0 9 10"><path d="M.5 .5L8.500 5 .5 9.500z" fill="#ababab"/></svg>
<svg class="ic" style="left:43px;top:218px;width:16px;height:16px"><use href="#i-dwarn"/></svg>
<div class="t" style="left:63px;top:219px;letter-spacing:-0.051px;">Waitinglist Coaches</div>
<svg class="a" style="left:27px;top:239px;width:9px;height:10px" viewBox="0 0 9 10"><path d="M.5 .5L8.500 5 .5 9.500z" fill="#ababab"/></svg>
<svg class="ic" style="left:43px;top:236px;width:16px;height:16px"><use href="#i-dwarn"/></svg>
<div class="t" style="left:63px;top:237px;letter-spacing:-0.171px;">Waitinglist Referees</div>
<svg class="a" style="left:27px;top:257px;width:9px;height:10px" viewBox="0 0 9 10"><path d="M.5 .5L8.500 5 .5 9.500z" fill="#ababab"/></svg>
<svg class="ic" style="left:43px;top:254px;width:16px;height:16px"><use href="#i-dwarn"/></svg>
<div class="t" style="left:63px;top:255px;letter-spacing:0.099px;">Waitinglist Officials</div>
<svg class="a" style="left:8px;top:276px;width:10px;height:9px" viewBox="0 0 10 9"><path d="M.3 .5h9.400L5 8.500z" fill="#ababab"/></svg>
<svg class="ic" style="left:25px;top:272px;width:16px;height:16px"><use href="#i-draw"/></svg>
<div class="t" style="left:45px;top:273px;letter-spacing:-0.117px;">Draw, Draw record, Point table...</div>
<svg class="a" style="left:27px;top:293px;width:9px;height:10px" viewBox="0 0 9 10"><path d="M.5 .5L8.500 5 .5 9.500z" fill="#ababab"/></svg>
<svg class="ic" style="left:43px;top:290px;width:16px;height:16px"><use href="#i-draw"/></svg>
<div class="t" style="left:63px;top:291px;letter-spacing:-0.334px;">Draw</div>
<svg class="a" style="left:27px;top:311px;width:9px;height:10px" viewBox="0 0 9 10"><path d="M.5 .5L8.500 5 .5 9.500z" fill="#ababab"/></svg>
<svg class="ic" style="left:43px;top:308px;width:16px;height:16px"><use href="#i-ptable"/></svg>
<div class="t" style="left:63px;top:309px;letter-spacing:0.029px;">Point table</div>
<svg class="a" style="left:27px;top:329px;width:9px;height:10px" viewBox="0 0 9 10"><path d="M.5 .5L8.500 5 .5 9.500z" fill="#ababab"/></svg>
<svg class="ic" style="left:43px;top:326px;width:16px;height:16px"><use href="#i-drawrec"/></svg>
<div class="t" style="left:63px;top:327px;letter-spacing:-0.135px;">Draw record</div>
<svg class="a" style="left:27px;top:347px;width:9px;height:10px" viewBox="0 0 9 10"><path d="M.5 .5L8.500 5 .5 9.500z" fill="#ababab"/></svg>
<svg class="ic" style="left:43px;top:344px;width:16px;height:16px"><use href="#i-pool"/></svg>
<div class="t" style="left:63px;top:345px;letter-spacing:0.030px;">Pool winner</div>
<svg class="a" style="left:27px;top:365px;width:9px;height:10px" viewBox="0 0 9 10"><path d="M.5 .5L8.500 5 .5 9.500z" fill="#ababab"/></svg>
<svg class="ic" style="left:43px;top:362px;width:16px;height:16px"><use href="#i-repe"/></svg>
<div class="t" style="left:63px;top:363px;letter-spacing:-0.422px;">Repechage</div>
<svg class="a" style="left:27px;top:383px;width:9px;height:10px" viewBox="0 0 9 10"><path d="M.5 .5L8.500 5 .5 9.500z" fill="#ababab"/></svg>
<svg class="ic" style="left:43px;top:380px;width:16px;height:16px"><use href="#i-dbl"/></svg>
<div class="t" style="left:63px;top:381px;letter-spacing:0.134px;">Double-Elimination</div>
<svg class="a" style="left:9px;top:401px;width:9px;height:10px" viewBox="0 0 9 10"><path d="M.5 .5L8.500 5 .5 9.500z" fill="#ababab"/></svg>
<svg class="ic" style="left:25px;top:398px;width:16px;height:16px"><use href="#i-result"/></svg>
<div class="t" style="left:45px;top:399px;letter-spacing:-0.403px;">Result</div>
<div class="pnl" style="left:324px;top:28px;width:961px;height:213px;background:#f2f2f2"></div>
<div class="a" style="left:325px;top:29px;width:960px;height:22px;background:linear-gradient(90deg,#fff 0%,#fff 10%,#f4f4f4 60%,#f2f2f2 100%)"></div>
<svg class="ic" style="left:326px;top:32px;width:16px;height:16px"><use href="#i-home"/></svg>
<div class="t" style="left:347px;top:33px;letter-spacing:-0.737px;">Events</div>
<div class="a" style="left:1188px;top:30px;width:1px;height:21px;background:#dcdcdc"></div>
<div class="a" style="left:1213px;top:30px;width:1px;height:21px;background:#dcdcdc"></div>
<div class="a" style="left:1238px;top:30px;width:1px;height:21px;background:#dcdcdc"></div>
<svg class="ic" style="left:1168px;top:32px;width:16px;height:16px"><use href="#i-tbledit"/></svg>
<svg class="ic" style="left:1193px;top:32px;width:16px;height:16px"><use href="#i-folder2"/></svg>
<svg class="ic" style="left:1218px;top:32px;width:16px;height:16px"><use href="#i-clock"/></svg>
<svg class="ic" style="left:1243px;top:33px;width:16px;height:14px"><use href="#i-max"/></svg>
<svg class="ic" style="left:1268px;top:35px;width:10px;height:10px"><use href="#i-x"/></svg>
<div class="a" style="left:327px;top:53px;width:234px;height:22px;background:#fff;border:1px solid #c4c4c4"></div>
<div class="a" style="left:565px;top:53px;width:22px;height:22px;background:#fff;border:1px solid #c4c4c4;border-radius:3px"></div>
<svg class="ic" style="left:568px;top:56px;width:16px;height:16px"><use href="#i-mag"/></svg>
<div class="a" style="left:601px;top:53px;width:19px;height:22px;background:#fff;border:1px solid #c4c4c4;border-radius:3px"></div>
<svg class="ic" style="left:603px;top:57px;width:15px;height:15px"><use href="#i-refresh"/></svg>
<div class="a" style="left:634px;top:57px;width:15px;height:15px;border-radius:50%;background:#3d8fe0"></div><div class="a" style="left:639px;top:62px;width:5px;height:5px;border-radius:50%;background:#fff"></div>
<div class="t" style="left:653px;top:57px;letter-spacing:-0.180px;">Show actual events</div>
<div class="a" style="left:763px;top:57px;width:15px;height:15px;border-radius:50%;background:#fff;border:1px solid #b0b0b0"></div>
<div class="t" style="left:782px;top:57px;letter-spacing:-0.218px;">Show all events</div>
<div class="a" style="left:1030px;top:62px;width:146px;height:4px;border-radius:2px;background:#2d7fe0"></div>
<div class="a" style="left:1091px;top:62px;width:24px;height:4px;font-size:5px;line-height:4px;color:#cfe2fa;text-align:center;overflow:hidden;letter-spacing:0">100 %</div>
<div class="t" style="left:1186px;top:57px;letter-spacing:-0.102px;">1 / 1 Record found</div>
<div class="a" style="left:327px;top:79px;width:956px;height:160px;background:#fff;border:1px solid #c4c4c4"></div>
<div class="a" style="left:328px;top:104px;width:944px;height:1px;background:#e6e6e6"></div>
<div class="a" style="left:479px;top:80px;width:1px;height:24px;background:#e4e4e4"></div>
<div class="t" style="left:387px;top:85px;letter-spacing:-1.252px;">EVENT</div>
<div class="a" style="left:604px;top:80px;width:1px;height:24px;background:#e4e4e4"></div>
<div class="t" style="left:515px;top:85px;letter-spacing:-0.860px;">DEADLINE</div>
<div class="a" style="left:738px;top:80px;width:1px;height:24px;background:#e4e4e4"></div>
<div class="t" style="left:640px;top:85px;letter-spacing:-0.940px;">START DATE</div>
<div class="a" style="left:863px;top:80px;width:1px;height:24px;background:#e4e4e4"></div>
<div class="t" style="left:774.5px;top:85px;letter-spacing:-0.969px;">END DATE</div>
<div class="a" style="left:987px;top:80px;width:1px;height:24px;background:#e4e4e4"></div>
<div class="t" style="left:899px;top:85px;letter-spacing:-1.019px;">COUNTRY</div>
<div class="a" style="left:1139px;top:80px;width:1px;height:24px;background:#e4e4e4"></div>
<div class="t" style="left:1040px;top:85px;letter-spacing:-1.503px;">ADDRESS</div>
<div class="a" style="left:1271px;top:80px;width:1px;height:24px;background:#e4e4e4"></div>
<div class="t" style="left:1193.5px;top:85px;letter-spacing:-1.948px;">TYPE</div>
<div class="a" style="left:1272px;top:80px;width:10px;height:25px;background:#f7f7f7"></div>
<svg class="ic" style="left:1272px;top:87px;width:10px;height:10px"><use href="#i-colch"/></svg>
<div class="a" style="left:328px;top:105px;width:944px;height:18px;background:#a0a0ff"></div>
<div class="t" style="left:329px;top:107px;letter-spacing:-0.312px;">Knowledge Base</div>
<div class="t" style="left:481px;top:107px;letter-spacing:-0.673px;">2023.12.31</div>
<div class="t" style="left:606px;top:107px;letter-spacing:-0.673px;">2023.12.31</div>
<div class="t" style="left:740px;top:107px;letter-spacing:-0.673px;">2023.12.31</div>
<div class="t" style="left:865px;top:107px;letter-spacing:-1.002px;">AUSTRIA</div>
<div class="t" style="left:989px;top:107px;letter-spacing:-0.312px;">Knowledge Base</div>
<div class="t" style="left:1141px;top:107px;letter-spacing:0.181px;">Tournament</div>
<div class="pnl" style="left:324px;top:249px;width:961px;height:783px;background:#f2f2f2"></div>
<div class="a" style="left:348px;top:250px;width:1px;height:782px;background:#c9c9c9"></div>
<div class="a" style="left:349px;top:250px;width:936px;height:22px;background:linear-gradient(90deg,#fff 0%,#fff 10%,#f4f4f4 60%,#f2f2f2 100%)"></div>
<svg class="ic" style="left:330px;top:253px;width:16px;height:16px"><use href="#i-docs"/></svg>
<svg class="ic" style="left:351px;top:253px;width:16px;height:16px"><use href="#i-db"/></svg>
<div class="t" style="left:371px;top:254px;letter-spacing:0.035px;">Welcome</div>
<svg class="ic" style="left:1243px;top:254px;width:16px;height:14px"><use href="#i-max"/></svg>
<svg class="ic" style="left:1268px;top:256px;width:10px;height:10px"><use href="#i-x"/></svg>
<div class="a" style="left:351px;top:274px;width:932px;height:732px;border:1px solid #d0d0d0;background:#f2f2f2"></div>
<div class="a" id="wimg" style="left:358px;top:277px;width:917px;height:726px;overflow:hidden;background:#05060b">
<div class="a" style="left:0;top:0;width:917px;height:726px;background:radial-gradient(ellipse 470px 340px at 650px 600px,rgba(21,25,39,.98),rgba(16,19,30,.7) 50%,rgba(8,10,16,0) 100%),linear-gradient(180deg,#020307 0%,#04050a 50%,#0a0c14 100%)"></div>
<svg class="a" style="left:0;top:0;width:917px;height:726px" viewBox="0 0 917 726"><g fill="none">
<path d="M0 294L385 726" stroke="#010205" stroke-width="6" opacity=".5"/><path d="M0 294L385 726" stroke="#010205" stroke-width="2.500" opacity=".9"/>
<path d="M600 372L716 461L917 592" stroke="#010205" stroke-width="5" opacity=".4"/><path d="M600 372L716 461L917 592" stroke="#010205" stroke-width="2" opacity=".8"/>
<path d="M869 276L917 303" stroke="#010205" stroke-width="2.500" opacity=".8"/>
<path d="M0 482L129 436" stroke="#8a8fa2" stroke-width="1" opacity=".55"/>
<path d="M142 431L252 396" stroke="#8a8fa2" stroke-width="1" opacity=".2"/>
<path d="M36 726L279 610" stroke="#9a9fb2" stroke-width="1.100" opacity=".6"/>
<path d="M294 601L442 537" stroke="#8a8fa2" stroke-width="1.500" opacity=".4"/>
<path d="M442 537L560 488" stroke="#8a8fa2" stroke-width="1" opacity=".3"/>
<path d="M589 726L916 559" stroke="#7078a0" stroke-width="1.600" opacity=".4"/>
<path d="M730 330L917 262" stroke="#5a6078" stroke-width="1" opacity=".3"/>
</g></svg>
<div class="a" style="left:-27.0px;top:13.5px;width:120px;height:48px;transform-origin:50% 100%;transform:rotate(-4deg);background:radial-gradient(ellipse 50% 100% at 50% 100%,rgba(165,175,225,0.6) 0%,rgba(120,130,185,0.33) 30%,rgba(90,100,150,0.12) 60%,rgba(80,90,140,0) 100%)"></div>
<div class="a" style="left:-9.0px;top:53.5px;width:84.0px;height:16px;transform:rotate(-4deg);background:radial-gradient(ellipse closest-side,rgba(150,160,215,0.30),rgba(100,110,170,0) 100%)"></div>
<div class="a" style="left:10.5px;top:55.5px;width:45.0px;height:12px;transform:rotate(-4deg);background:radial-gradient(ellipse closest-side,rgba(225,230,255,0.66),rgba(170,180,230,.2) 60%,rgba(120,130,190,0) 100%)"></div>
<div class="a" style="left:18.0px;top:60.0px;width:30px;height:3px;transform:rotate(-4deg);background:radial-gradient(ellipse closest-side,rgba(255,255,255,0.95),rgba(255,255,255,0.71) 55%,rgba(255,255,255,0) 100%)"></div>
<div class="a" style="left:323.0px;top:16px;width:130px;height:46px;transform-origin:50% 100%;transform:rotate(-4deg);background:radial-gradient(ellipse 50% 100% at 50% 100%,rgba(165,175,225,0.6) 0%,rgba(120,130,185,0.33) 30%,rgba(90,100,150,0.12) 60%,rgba(80,90,140,0) 100%)"></div>
<div class="a" style="left:342.5px;top:54px;width:91.0px;height:16px;transform:rotate(-4deg);background:radial-gradient(ellipse closest-side,rgba(150,160,215,0.30),rgba(100,110,170,0) 100%)"></div>
<div class="a" style="left:362.5px;top:56px;width:51.0px;height:12px;transform:rotate(-4deg);background:radial-gradient(ellipse closest-side,rgba(225,230,255,0.59),rgba(170,180,230,.2) 60%,rgba(120,130,190,0) 100%)"></div>
<div class="a" style="left:371.0px;top:60.5px;width:34px;height:3px;transform:rotate(-4deg);background:radial-gradient(ellipse closest-side,rgba(255,255,255,0.85),rgba(255,255,255,0.64) 55%,rgba(255,255,255,0) 100%)"></div>
<div class="a" style="left:129.0px;top:180px;width:110px;height:42px;transform-origin:50% 100%;transform:rotate(-8deg);background:radial-gradient(ellipse 50% 100% at 50% 100%,rgba(165,175,225,0.45) 0%,rgba(120,130,185,0.25) 30%,rgba(90,100,150,0.09) 60%,rgba(80,90,140,0) 100%)"></div>
<div class="a" style="left:145.5px;top:214px;width:77.0px;height:16px;transform:rotate(-8deg);background:radial-gradient(ellipse closest-side,rgba(150,160,215,0.23),rgba(100,110,170,0) 100%)"></div>
<div class="a" style="left:164.5px;top:216px;width:39.0px;height:12px;transform:rotate(-8deg);background:radial-gradient(ellipse closest-side,rgba(225,230,255,0.56),rgba(170,180,230,.2) 60%,rgba(120,130,190,0) 100%)"></div>
<div class="a" style="left:171.0px;top:220.5px;width:26px;height:3px;transform:rotate(-8deg);background:radial-gradient(ellipse closest-side,rgba(255,255,255,0.8),rgba(255,255,255,0.60) 55%,rgba(255,255,255,0) 100%)"></div>
<div class="a" style="left:637.0px;top:237px;width:130px;height:50px;transform-origin:50% 100%;transform:rotate(-14deg);background:radial-gradient(ellipse 50% 100% at 50% 100%,rgba(165,175,225,0.6) 0%,rgba(120,130,185,0.33) 30%,rgba(90,100,150,0.12) 60%,rgba(80,90,140,0) 100%)"></div>
<div class="a" style="left:656.5px;top:279px;width:91.0px;height:16px;transform:rotate(-14deg);background:radial-gradient(ellipse closest-side,rgba(150,160,215,0.30),rgba(100,110,170,0) 100%)"></div>
<div class="a" style="left:679.5px;top:281px;width:45.0px;height:12px;transform:rotate(-14deg);background:radial-gradient(ellipse closest-side,rgba(225,230,255,0.66),rgba(170,180,230,.2) 60%,rgba(120,130,190,0) 100%)"></div>
<div class="a" style="left:687.0px;top:285.5px;width:30px;height:3px;transform:rotate(-14deg);background:radial-gradient(ellipse closest-side,rgba(255,255,255,0.95),rgba(255,255,255,0.71) 55%,rgba(255,255,255,0) 100%)"></div>
<div class="a" style="left:781.5px;top:319.5px;width:170px;height:66px;transform-origin:50% 100%;transform:rotate(-16deg);background:radial-gradient(ellipse 50% 100% at 50% 100%,rgba(165,175,225,0.8) 0%,rgba(120,130,185,0.44) 30%,rgba(90,100,150,0.16) 60%,rgba(80,90,140,0) 100%)"></div>
<div class="a" style="left:807.0px;top:377.5px;width:118.99999999999999px;height:16px;transform:rotate(-16deg);background:radial-gradient(ellipse closest-side,rgba(150,160,215,0.40),rgba(100,110,170,0) 100%)"></div>
<div class="a" style="left:838.0px;top:379.5px;width:57.0px;height:12px;transform:rotate(-16deg);background:radial-gradient(ellipse closest-side,rgba(225,230,255,0.66),rgba(170,180,230,.2) 60%,rgba(120,130,190,0) 100%)"></div>
<div class="a" style="left:847.5px;top:384.0px;width:38px;height:3px;transform:rotate(-16deg);background:radial-gradient(ellipse closest-side,rgba(255,255,255,0.95),rgba(255,255,255,0.71) 55%,rgba(255,255,255,0) 100%)"></div>
<div class="a" style="left:417.0px;top:444px;width:180px;height:70px;transform-origin:50% 100%;transform:rotate(-18deg);background:radial-gradient(ellipse 50% 100% at 50% 100%,rgba(165,175,225,0.8) 0%,rgba(120,130,185,0.44) 30%,rgba(90,100,150,0.16) 60%,rgba(80,90,140,0) 100%)"></div>
<div class="a" style="left:444.0px;top:506px;width:125.99999999999999px;height:16px;transform:rotate(-18deg);background:radial-gradient(ellipse closest-side,rgba(150,160,215,0.40),rgba(100,110,170,0) 100%)"></div>
<div class="a" style="left:475.5px;top:508px;width:63.0px;height:12px;transform:rotate(-18deg);background:radial-gradient(ellipse closest-side,rgba(225,230,255,0.66),rgba(170,180,230,.2) 60%,rgba(120,130,190,0) 100%)"></div>
<div class="a" style="left:486.0px;top:512.5px;width:42px;height:3px;transform:rotate(-18deg);background:radial-gradient(ellipse closest-side,rgba(255,255,255,0.95),rgba(255,255,255,0.71) 55%,rgba(255,255,255,0) 100%)"></div>
<div class="a" style="left:576.0px;top:602px;width:200px;height:80px;transform-origin:50% 100%;transform:rotate(-26deg);background:radial-gradient(ellipse 50% 100% at 50% 100%,rgba(165,175,225,0.85) 0%,rgba(120,130,185,0.47) 30%,rgba(90,100,150,0.17) 60%,rgba(80,90,140,0) 100%)"></div>
<div class="a" style="left:606.0px;top:674px;width:140.0px;height:16px;transform:rotate(-26deg);background:radial-gradient(ellipse closest-side,rgba(150,160,215,0.42),rgba(100,110,170,0) 100%)"></div>
<div class="a" style="left:640.0px;top:676px;width:72.0px;height:12px;transform:rotate(-26deg);background:radial-gradient(ellipse closest-side,rgba(225,230,255,0.66),rgba(170,180,230,.2) 60%,rgba(120,130,190,0) 100%)"></div>
<div class="a" style="left:652.0px;top:680.5px;width:48px;height:3px;transform:rotate(-26deg);background:radial-gradient(ellipse closest-side,rgba(255,255,255,0.95),rgba(255,255,255,0.71) 55%,rgba(255,255,255,0) 100%)"></div>
<div class="a" style="left:891px;top:572px;width:3px;height:3px;border-radius:50%;background:#dfe4ff"></div>
<svg class="a" style="left:200px;top:10px;width:520px;height:90px" viewBox="0 0 520 90"><defs>
<linearGradient id="lg1" x1="0" y1="0" x2="0" y2="1"><stop offset="0" stop-color="#f4f4f4"/><stop offset=".5" stop-color="#c4c4c4"/><stop offset="1" stop-color="#7a7a7a"/></linearGradient>
<linearGradient id="lg2" x1="0" y1="0" x2="0" y2="1"><stop offset="0" stop-color="#e8e8e8"/><stop offset=".6" stop-color="#8a8a8a"/><stop offset="1" stop-color="#3a3a3a"/></linearGradient></defs>
<path d="M158 16C130 6 90 4 60 12C36 19 28 30 40 39C46 44 54 46 60 45.500C47 40 39 33 45 26C54 16 100 9 158 16z" fill="#1212b4"/>
<path d="M11 50C40 58 90 58 115 50C135 43 143 32 134 23C130 19 124 16 119 15.600C126 22 128 30 122 36C110 47 60 54 11 50z" fill="#d40c0c"/>
<g transform="matrix(1 0 0.6 -1 -558 43.4)" fill="none"><path d="M656 21.500H621Q616.500 21.500 616.500 17V16.500Q616.500 12 621 12H648Q652.500 12 652.500 7.500V7Q652.500 2.500 648 2.500H613" stroke="#2c2c2c" stroke-width="7.400"/><path d="M656 21.500H621Q616.500 21.500 616.500 17V16.500Q616.500 12 621 12H648Q652.500 12 652.500 7.500V7Q652.500 2.500 648 2.500H613" stroke="#cfcfcf" stroke-width="5.400"/><path d="M656 21.500H621Q616.500 21.500 616.500 17V16.500Q616.500 12 621 12H648Q652.500 12 652.500 7.500V7Q652.500 2.500 648 2.500H613" stroke="#f2f2f2" stroke-width="2" transform="translate(0 .9)"/></g>
<g transform="matrix(1 0 0.31 -1 -558 42)"><path d="M705 -7.5H710.6V21.6H705zM717 17.5H746.3V21.6H717zM740.7 0H746.3V21.6H740.7zM717.6 0H746.3V4.1H717.6zM756.7 0H762.3V21.6H756.7zM784.9 0H790.5V21.6H784.9zM756.7 17.5H790.5V21.6H756.7zM756.7 0H790.5V4.1H756.7zM804.4 0H810V21.6H804.4zM804.4 17.5H831.3V21.6H804.4zM841.2 0H846.8V32H841.2zM839 17.5H870.4V21.6H839zM841.2 0H1060V4.1H841.2zM873 0H878.6V21.6H873zM873 17.5H911.8V21.6H873zM906.2 0H911.8V32H906.2zM923.8 17.5H956.3V21.6H923.8zM950.7 0H956.3V21.6H950.7zM920 8.8H956.3V12.6H920zM920 0H925.6V12.6H920zM979.9 0H985.5V32H979.9zM973.3 17.5H1002.4V21.6H973.3zM1008.2 17.5H1044.8V21.6H1008.2zM1039.2 0H1044.8V21.6H1039.2zM1002.5 8.8H1044.8V12.6H1002.5zM1002.5 0H1008.1V12.6H1002.5z" fill="#3c3c3c" stroke="#3c3c3c" stroke-width="1.800" stroke-linejoin="round"/><path d="M705 -7.5H710.6V21.6H705zM717 17.5H746.3V21.6H717zM740.7 0H746.3V21.6H740.7zM717.6 0H746.3V4.1H717.6zM756.7 0H762.3V21.6H756.7zM784.9 0H790.5V21.6H784.9zM756.7 17.5H790.5V21.6H756.7zM756.7 0H790.5V4.1H756.7zM804.4 0H810V21.6H804.4zM804.4 17.5H831.3V21.6H804.4zM841.2 0H846.8V32H841.2zM839 17.5H870.4V21.6H839zM841.2 0H1060V4.1H841.2zM873 0H878.6V21.6H873zM873 17.5H911.8V21.6H873zM906.2 0H911.8V32H906.2zM923.8 17.5H956.3V21.6H923.8zM950.7 0H956.3V21.6H950.7zM920 8.8H956.3V12.6H920zM920 0H925.6V12.6H920zM979.9 0H985.5V32H979.9zM973.3 17.5H1002.4V21.6H973.3zM1008.2 17.5H1044.8V21.6H1008.2zM1039.2 0H1044.8V21.6H1039.2zM1002.5 8.8H1044.8V12.6H1002.5zM1002.5 0H1008.1V12.6H1002.5z" fill="#cacaca" stroke="#cacaca" stroke-width=".5" stroke-linejoin="round"/></g>
<text x="172" y="72" font-family="Liberation Sans" font-style="italic" font-size="31" textLength="306" lengthAdjust="spacingAndGlyphs" fill="#34343a" stroke="#b4b4b4" stroke-width=".9">event technology</text>
</svg>
<div class="a" style="left:0;top:95px;width:917px;text-align:center;color:#fff;font-weight:700;font-size:12px;letter-spacing:0;text-decoration:underline;line-height:16px;white-space:pre">www.sportdata.org</div>
<div class="a" style="left:277px;top:123px;white-space:pre;color:#fff;font-weight:700;font-size:14.670px;letter-spacing:-0.030px;line-height:17px">SET v 10.2.0 build 1 (2024-06-01 09:26 CET) / </div>
<svg class="ic" style="left:589px;top:122px;width:14px;height:14px"><use href="#i-db"/></svg>
<div class="a" style="left:610px;top:123px;white-space:pre;color:#fff;font-weight:700;font-size:14.670px;letter-spacing:0;line-height:17px">Test</div>
<div class="a" style="left:0;top:141px;width:917px;text-align:center;color:#fff;font-weight:700;font-size:14.670px;letter-spacing:0;line-height:17px;white-space:pre">Administration Mode</div>
<svg class="a" style="left:177px;top:183px;width:40px;height:39px"><use href="#i-arrowbtn"/></svg>
<div class="a" style="left:232px;top:193px;white-space:pre;color:#fff;font-weight:700;font-size:14.670px;letter-spacing:.25px;line-height:17px">news and updates</div>
<div class="a" style="left:542px;width:200px;text-align:right;top:193px;white-space:pre;color:#fff;font-weight:700;font-size:14.670px;letter-spacing:.25px;line-height:17px">user forum</div>
<svg class="a" style="left:177px;top:240px;width:40px;height:39px"><use href="#i-arrowbtn"/></svg>
<div class="a" style="left:232px;top:250px;white-space:pre;color:#fff;font-weight:700;font-size:14.670px;letter-spacing:.25px;line-height:17px">online documentation</div>
<div class="a" style="left:539px;width:200px;text-align:right;top:250px;white-space:pre;color:#fff;font-weight:700;font-size:14.670px;letter-spacing:.25px;line-height:17px">changelog</div>
<svg class="a" style="left:177px;top:297px;width:40px;height:39px"><use href="#i-arrowbtn"/></svg>
<div class="a" style="left:232px;top:307px;white-space:pre;color:#fff;font-weight:700;font-size:14.670px;letter-spacing:.25px;line-height:17px">video tutorials</div>
<div class="a" style="left:518px;width:200px;text-align:right;top:307px;white-space:pre;color:#fff;font-weight:700;font-size:14.670px;letter-spacing:.25px;line-height:17px">contact</div>
<div class="a" style="left:184px;top:381px;white-space:pre;color:#fff;font-weight:700;font-size:12px;letter-spacing:0;line-height:16px">(c)sportdata GmbH &amp; Co KG 2000-2024</div>
<div class="a" style="left:432px;width:300px;text-align:right;top:381px;white-space:pre;color:#fff;font-weight:700;font-size:12px;letter-spacing:0;line-height:16px">09:26 CET)</div>
</div>
<svg class="ic" style="left:329px;top:1012px;width:16px;height:14px"><use href="#i-max"/></svg>
<div class="a" style="left:758px;top:1008px;width:82px;height:23px;background:#dedede"></div>
<svg class="ic" style="left:353px;top:1012px;width:16px;height:16px"><use href="#i-cats"/></svg>
<div class="t" style="left:376px;top:1013px;letter-spacing:-0.003px;">Competitor Categories</div>
<div class="a" style="left:502px;top:1010px;width:1px;height:18px;background:#dcdcdc"></div>
<svg class="ic" style="left:507px;top:1012px;width:16px;height:16px"><use href="#i-cats2"/></svg>
<div class="t" style="left:530px;top:1013px;letter-spacing:-0.283px;">Officials Categories, Coach, Referee, Press</div>
<svg class="ic" style="left:761px;top:1012px;width:16px;height:16px"><use href="#i-db"/></svg>
<div class="t" style="left:784px;top:1013px;letter-spacing:0.035px;">Welcome</div>
<div class="pnl" style="left:0;top:1039px;width:1285px;height:135px;background:#f2f2f2"></div>
<div class="a" style="left:1px;top:1040px;width:1284px;height:22px;background:linear-gradient(90deg,#fff 0%,#fff 10%,#f6f6f6 60%,#f2f2f2 100%)"></div>
<svg class="ic" style="left:2px;top:1043px;width:16px;height:16px"><use href="#i-term"/></svg>
<div class="t" style="left:23px;top:1044px;letter-spacing:-0.289px;">Message Console</div>
<svg class="ic" style="left:1243px;top:1043px;width:16px;height:16px"><use href="#i-trash"/></svg>
<svg class="ic" style="left:1265px;top:1044px;width:16px;height:14px"><use href="#i-max"/></svg>
<div class="a" style="left:3px;top:1064px;width:1280px;height:108px;border:1px solid #c9c9c9;background:#f2f2f2"></div>
<div class="a" style="left:0;top:1176px;width:1720px;height:1px;background:#dadada"></div>
<div class="a" style="left:0;top:1177px;width:1720px;height:1px;background:#8e9096"></div>
<div class="a" style="left:0;top:1178px;width:1720px;height:21px;background:linear-gradient(180deg,#c4c5ca 0%,#d8d9dd 18%,#dfe0e4 45%,#dddee2 75%,#cbccd0 100%)"></div>
<div class="a" style="left:0;top:1199px;width:1720px;height:1px;background:#f6f6f6"></div>
<div class="t" style="left:5px;top:1182px;font-weight:700;font-size:10.300px;letter-spacing:0.047px;line-height:14px;height:14px">2024-07-14 08:41:26:142 [INFO] Messages found 0</div>
<svg class="a" style="left:1706px;top:1186px;width:12px;height:12px" viewBox="0 0 12 12"><g fill="#9a9a9a"><rect x="9" y="1" width="2" height="2"/><rect x="5" y="5" width="2" height="2"/><rect x="9" y="5" width="2" height="2"/><rect x="1" y="9" width="2" height="2"/><rect x="5" y="9" width="2" height="2"/><rect x="9" y="9" width="2" height="2"/></g></svg>
<div class="pnl" style="left:1292px;top:28px;width:425px;height:1145px;background:#f2f2f2"></div>
<div class="a" style="left:1293px;top:29px;width:424px;height:23px;background:linear-gradient(90deg,#fff 0%,#fff 10%,#f6f6f6 60%,#f2f2f2 100%)"></div>
<svg class="ic" style="left:1294px;top:31px;width:16px;height:16px"><use href="#i-tblchk"/></svg>
<div class="t" style="left:1315px;top:33px;letter-spacing:-0.058px;">Main data / Entries</div>
<svg class="ic" style="left:1675px;top:33px;width:16px;height:14px"><use href="#i-max"/></svg>
<svg class="ic" style="left:1699px;top:35px;width:10px;height:10px"><use href="#i-x"/></svg>
<div class="a" style="left:1295px;top:53px;width:420px;height:1119px;border:1px solid #c9c9c9;background:#fff;overflow:hidden">
<div class="a" style="left:10px;top:10px;width:388px;height:25px;background:linear-gradient(90deg,#dcdee6 0%,#e4e5ea 40%,#eeeeef 75%,#f1f1f1 100%)"></div>
<div class="a" style="left:10px;top:10px;width:3px;height:1px;background:#4a80dc"></div><div class="a" style="left:10px;top:10px;width:1px;height:3px;background:#6a98e4"></div><div class="a" style="left:396px;top:10px;width:2px;height:1px;background:#4a80dc"></div>
<div class="a" style="left:10px;top:35px;width:388px;height:183px;background:#f2f2f2;border:1px solid #c4c4c4;border-top:none"></div>
<div class="t" style="left:21px;top:15px;letter-spacing:-0.168px;font-weight:700;">Main data</div>
<svg class="ic" style="left:373px;top:14px"><use href="#i-chev"/></svg>
<svg class="ic" style="left:22px;top:45px"><use href="#i-p1"/></svg>
<div class="t" style="left:42px;top:46px;letter-spacing:0.131px;">Competitors</div>
<svg class="ic" style="left:22px;top:63px"><use href="#i-p2"/></svg>
<div class="t" style="left:42px;top:64px;letter-spacing:-0.393px;">Coaches</div>
<svg class="ic" style="left:22px;top:81px"><use href="#i-p3"/></svg>
<div class="t" style="left:42px;top:82px;letter-spacing:-0.670px;">Referees</div>
<svg class="ic" style="left:22px;top:99px"><use href="#i-p4"/></svg>
<div class="t" style="left:42px;top:100px;letter-spacing:0.068px;">Officials</div>
<svg class="ic" style="left:22px;top:117px"><use href="#i-house"/></svg>
<div class="t" style="left:42px;top:118px;letter-spacing:-0.170px;">Clubs</div>
<svg class="ic" style="left:22px;top:135px"><use href="#i-catf"/></svg>
<div class="t" style="left:42px;top:136px;letter-spacing:-0.226px;">Categories</div>
<svg class="ic" style="left:22px;top:153px"><use href="#i-globe"/></svg>
<div class="t" style="left:42px;top:154px;letter-spacing:0.052px;">Nations</div>
<svg class="ic" style="left:22px;top:171px"><use href="#i-globe2"/></svg>
<div class="t" style="left:42px;top:172px;letter-spacing:-0.210px;">Federal associations / Regions</div>
<svg class="ic" style="left:22px;top:189px"><use href="#i-forms"/></svg>
<div class="t" style="left:42px;top:190px;letter-spacing:-0.249px;">Forms</div>
<div class="a" style="left:10px;top:232px;width:388px;height:25px;background:linear-gradient(90deg,#dcdee6 0%,#e4e5ea 40%,#eeeeef 75%,#f1f1f1 100%)"></div>
<div class="a" style="left:10px;top:232px;width:3px;height:1px;background:#4a80dc"></div><div class="a" style="left:10px;top:232px;width:1px;height:3px;background:#6a98e4"></div><div class="a" style="left:396px;top:232px;width:2px;height:1px;background:#4a80dc"></div>
<div class="a" style="left:10px;top:257px;width:388px;height:255px;background:#f2f2f2;border:1px solid #c4c4c4;border-top:none"></div>
<div class="t" style="left:21px;top:237px;letter-spacing:-0.153px;font-weight:700;">Entries - Overviews / Statistics</div>
<svg class="ic" style="left:373px;top:236px"><use href="#i-chev"/></svg>
<svg class="ic" style="left:22px;top:267px"><use href="#i-clip"/></svg>
<div class="t" style="left:42px;top:268px;letter-spacing:-0.069px;">All entries</div>
<svg class="ic" style="left:22px;top:285px"><use href="#i-dwarn"/></svg>
<div class="t" style="left:42px;top:286px;letter-spacing:0.023px;">Waitinglist entries</div>
<svg class="ic" style="left:22px;top:303px"><use href="#i-clip"/></svg>
<div class="t" style="left:42px;top:304px;letter-spacing:-0.170px;">Coach entries</div>
<svg class="ic" style="left:22px;top:321px"><use href="#i-clip"/></svg>
<div class="t" style="left:42px;top:322px;letter-spacing:-0.396px;">Referee entries</div>
<svg class="ic" style="left:22px;top:339px"><use href="#i-clip"/></svg>
<div class="t" style="left:42px;top:340px;letter-spacing:-0.050px;">Officials entries</div>
<svg class="ic" style="left:22px;top:357px"><use href="#i-clip"/></svg>
<div class="t" style="left:42px;top:358px;letter-spacing:-0.073px;">Head of Delegation</div>
<svg class="ic" style="left:22px;top:375px"><use href="#i-rep"/></svg>
<div class="t" style="left:42px;top:376px;letter-spacing:-0.149px;">Clubs and entries</div>
<svg class="ic" style="left:22px;top:393px"><use href="#i-rep"/></svg>
<div class="t" style="left:42px;top:394px;letter-spacing:-0.213px;">States / Regions and entries</div>
<svg class="ic" style="left:22px;top:411px"><use href="#i-rep"/></svg>
<div class="t" style="left:42px;top:412px;letter-spacing:-0.105px;">Nations and entries</div>
<svg class="ic" style="left:22px;top:429px"><use href="#i-rep"/></svg>
<div class="t" style="left:42px;top:430px;letter-spacing:-0.178px;">Categories and entries</div>
<svg class="ic" style="left:22px;top:447px"><use href="#i-rep"/></svg>
<div class="t" style="left:42px;top:448px;letter-spacing:-0.002px;">Competitors in categories</div>
<svg class="ic" style="left:22px;top:465px"><use href="#i-rep"/></svg>
<div class="t" style="left:42px;top:466px;letter-spacing:-0.094px;">Clubs, Competitors, Categories</div>
<svg class="ic" style="left:22px;top:483px"><use href="#i-rep"/></svg>
<div class="t" style="left:42px;top:484px;letter-spacing:-0.094px;">Clubs, Categories, Competitors</div>
<div class="a" style="left:10px;top:526px;width:388px;height:25px;background:linear-gradient(90deg,#dcdee6 0%,#e4e5ea 40%,#eeeeef 75%,#f1f1f1 100%)"></div>
<div class="a" style="left:10px;top:526px;width:3px;height:1px;background:#4a80dc"></div><div class="a" style="left:10px;top:526px;width:1px;height:3px;background:#6a98e4"></div><div class="a" style="left:396px;top:526px;width:2px;height:1px;background:#4a80dc"></div>
<div class="a" style="left:10px;top:551px;width:388px;height:471px;background:#f2f2f2;border:1px solid #c4c4c4;border-top:none"></div>
<div class="t" style="left:21px;top:531px;letter-spacing:-0.223px;font-weight:700;">Reports</div>
<svg class="ic" style="left:373px;top:530px"><use href="#i-chev"/></svg>
<svg class="ic" style="left:22px;top:561px"><use href="#i-rep"/></svg>
<div class="t" style="left:42px;top:562px;letter-spacing:-0.124px;">Result Book - Countries</div>
<svg class="ic" style="left:22px;top:579px"><use href="#i-rep"/></svg>
<div class="t" style="left:42px;top:580px;letter-spacing:-0.128px;">Result Book - Countries and Clubs</div>
<svg class="ic" style="left:22px;top:597px"><use href="#i-rep"/></svg>
<div class="t" style="left:42px;top:598px;letter-spacing:-0.169px;">Result Book - Clubs</div>
<svg class="ic" style="left:22px;top:633px"><use href="#i-rep"/></svg>
<div class="t" style="left:42px;top:634px;letter-spacing:-0.121px;">Country Entries</div>
<svg class="ic" style="left:22px;top:651px"><use href="#i-rep"/></svg>
<div class="t" style="left:42px;top:652px;letter-spacing:-0.215px;">Club Entries</div>
<svg class="ic" style="left:22px;top:669px"><use href="#i-rep"/></svg>
<div class="t" style="left:42px;top:670px;letter-spacing:0.065px;">Participation (Total)</div>
<svg class="ic" style="left:22px;top:687px"><use href="#i-rep"/></svg>
<div class="t" style="left:42px;top:688px;letter-spacing:-0.082px;">Participation (Entries By Birthday) by Club</div>
<svg class="ic" style="left:22px;top:705px"><use href="#i-rep"/></svg>
<div class="t" style="left:42px;top:706px;letter-spacing:-0.078px;">Participation (Entries)</div>
<svg class="ic" style="left:22px;top:723px"><use href="#i-rep"/></svg>
<div class="t" style="left:42px;top:724px;letter-spacing:-0.074px;">Participation (Entries) by Club</div>
<svg class="ic" style="left:22px;top:741px"><use href="#i-rep"/></svg>
<div class="t" style="left:42px;top:742px;letter-spacing:-0.100px;">Participation (Entries By Birthday)</div>
<svg class="ic" style="left:22px;top:759px"><use href="#i-rep"/></svg>
<div class="t" style="left:42px;top:760px;letter-spacing:-0.082px;">Participation (Entries By Birthday) by Club</div>
<svg class="ic" style="left:22px;top:777px"><use href="#i-rep"/></svg>
<div class="t" style="left:42px;top:778px;letter-spacing:0.089px;">Participation Count</div>
<svg class="ic" style="left:22px;top:795px"><use href="#i-rep"/></svg>
<div class="t" style="left:42px;top:796px;letter-spacing:0.042px;">Participation Count by Club</div>
<svg class="ic" style="left:22px;top:813px"><use href="#i-rep"/></svg>
<div class="t" style="left:42px;top:814px;letter-spacing:-0.224px;">Statistics</div>
<svg class="ic" style="left:22px;top:831px"><use href="#i-rep"/></svg>
<div class="t" style="left:42px;top:832px;letter-spacing:0.083px;">Participation Count - Officials</div>
<svg class="ic" style="left:22px;top:849px"><use href="#i-rep"/></svg>
<div class="t" style="left:42px;top:850px;letter-spacing:-0.055px;">Officials per Category</div>
<svg class="ic" style="left:22px;top:867px"><use href="#i-rep"/></svg>
<div class="t" style="left:42px;top:868px;letter-spacing:-0.041px;">Officials per Category by Club</div>
<svg class="ic" style="left:22px;top:885px"><use href="#i-rep"/></svg>
<div class="t" style="left:42px;top:886px;letter-spacing:0.026px;">Officials per Country</div>
<svg class="ic" style="left:22px;top:903px"><use href="#i-rep"/></svg>
<div class="t" style="left:42px;top:904px;letter-spacing:-0.009px;">Officials per Club</div>
<svg class="ic" style="left:22px;top:921px"><use href="#i-rep"/></svg>
<div class="t" style="left:42px;top:922px;letter-spacing:-0.083px;">Officials by Other Role</div>
<svg class="ic" style="left:22px;top:939px"><use href="#i-rep"/></svg>
<div class="t" style="left:42px;top:940px;letter-spacing:-0.102px;">Entries in Categories - Country</div>
<svg class="ic" style="left:22px;top:957px"><use href="#i-rep"/></svg>
<div class="t" style="left:42px;top:958px;letter-spacing:-0.219px;">Entries in Categories</div>
<svg class="ic" style="left:22px;top:975px"><use href="#i-rep"/></svg>
<div class="t" style="left:42px;top:976px;letter-spacing:-0.148px;">Entries in Categories 1 Athlete</div>
<svg class="ic" style="left:22px;top:993px"><use href="#i-rep"/></svg>
<div class="t" style="left:42px;top:994px;letter-spacing:-0.092px;">Entries in Categories - Weigh-In</div>
<div class="a" style="left:10px;top:1036px;width:388px;height:25px;background:linear-gradient(90deg,#dcdee6 0%,#e4e5ea 40%,#eeeeef 75%,#f1f1f1 100%)"></div>
<div class="a" style="left:10px;top:1036px;width:3px;height:1px;background:#4a80dc"></div><div class="a" style="left:10px;top:1036px;width:1px;height:3px;background:#6a98e4"></div><div class="a" style="left:396px;top:1036px;width:2px;height:1px;background:#4a80dc"></div>
<div class="a" style="left:10px;top:1061px;width:388px;height:119px;background:#f2f2f2;border:1px solid #c4c4c4;border-top:none"></div>
<div class="t" style="left:21px;top:1041px;letter-spacing:-0.263px;font-weight:700;">Entries - Chart</div>
<svg class="ic" style="left:373px;top:1040px"><use href="#i-chev"/></svg>
<svg class="ic" style="left:22px;top:1071px"><use href="#i-bar"/></svg>
<div class="t" style="left:42px;top:1072px;letter-spacing:-0.149px;">Clubs and entries</div>
<svg class="ic" style="left:22px;top:1089px"><use href="#i-pie"/></svg>
<div class="t" style="left:42px;top:1090px;letter-spacing:-0.149px;">Clubs and entries</div>
<svg class="ic" style="left:22px;top:1107px"><use href="#i-bar"/></svg>
<div class="t" style="left:42px;top:1108px;letter-spacing:-0.213px;">States / Regions and entries</div>
<div class="a" style="left:408px;top:0;width:10px;height:1116px;background:#f3f3f3"></div>
<div class="a" style="left:408px;top:0;width:10px;height:994px;background:#dcdcdc"></div>
</div>
<div class="a" style="left:671px;top:430px;width:378px;height:338px;background:#f2f2f2;border-radius:7px;box-shadow:0 0 0 1px rgba(60,60,70,.35)"></div>
<div class="t" style="left:679px;top:437px;letter-spacing:-0.295px;">Please select a category!</div>
<svg class="a" style="left:1021px;top:438px;width:12px;height:12px" viewBox="0 0 12 12"><path d="M1 1l10 10M11 1L1 11" stroke="#1a1a1a" stroke-width="1" fill="none"/></svg>
<div class="a" style="left:685px;top:473px;width:350px;height:240px;border:1px solid #cfcfcf"></div>
<div class="a" style="left:688px;top:476px;width:344px;height:22px;background:#fff;border:1px solid #c4c4c4;border-radius:2px"></div>
<div class="a" style="left:688px;top:502px;width:344px;height:22px;background:#fff;border:1px solid #c4c4c4;border-radius:3px"></div>
<svg class="a" style="left:1016px;top:510px;width:10px;height:6px" viewBox="0 0 10 6"><path d="M.5 .5h9L5 5.500z" fill="#555"/></svg>
<div class="a" style="left:687px;top:526px;width:347px;height:149px;background:#fff;border:2px solid #97c3ea;border-radius:1px"></div>
<div class="a" style="left:689px;top:529px;width:342px;height:126px;background:#2675bf"></div>
<div class="t" style="left:695.5px;top:531px;letter-spacing:-0.300px;color:#fff">Category 1</div>
<div class="t" style="left:695.5px;top:549px;letter-spacing:-0.189px;color:#fff">Category 2</div>
<div class="t" style="left:695.5px;top:567px;letter-spacing:-0.321px;color:#fff">Category 2 +199508 YYYYMM</div>
<div class="t" style="left:695.5px;top:585px;letter-spacing:-0.321px;color:#fff">Category 2 -199508 YYYYMM</div>
<div class="t" style="left:695.5px;top:603px;letter-spacing:-0.105px;color:#fff">Category 6 - female</div>
<div class="t" style="left:695.5px;top:621px;letter-spacing:-0.086px;color:#fff">Category 6 - male</div>
<div class="t" style="left:695.5px;top:639px;letter-spacing:-0.114px;color:#fff">Team Category</div>
<div class="t" style="left:715px;top:687px;letter-spacing:0.031px;">Random number of Athletes</div>
<div class="a" style="left:872px;top:683.500px;width:72px;height:21px;background:#fff;border:1px solid #c4c4c4;border-radius:3px"></div>
<div class="t" style="left:879px;top:687px;">0</div>
<svg class="a" style="left:928px;top:692px;width:10px;height:6px" viewBox="0 0 10 6"><path d="M.5 .5h9L5 5.500z" fill="#555"/></svg>
<div class="a" style="left:954px;top:687.500px;width:14px;height:14px;background:#fff;border:1px solid #b0b0b0;border-radius:3px"></div>
<div class="t" style="left:972.5px;top:687px;letter-spacing:-1.073px;">use</div>
<div class="t" style="left:993.500px;top:687px;letter-spacing:0;transform-origin:0 50%;transform:scaleX(.9)">%</div>
<div class="a" style="left:963px;top:732px;width:72px;height:22px;background:#336eaa;border:1px solid #97c3ea;border-radius:3px"></div>
<div class="t" style="left:963px;top:736px;width:72px;text-align:center;color:#fff;font-weight:700;letter-spacing:0">OK</div>
<svg class="a" style="left:1020px;top:435px;width:290px;height:280px" viewBox="1020 435 290 280">
<path fill-rule="evenodd" d="M1030 445L1296 527L1172 568L1151 705zM1042.500 457L1279 527L1167 562.500L1148.500 679z" fill="rgba(255,255,255,.83)"/>
<path d="M1042.500 457L1279 527L1167 562.500L1148.500 679z" fill="rgba(255,113,114,.75)"/></svg>
</body></html>
